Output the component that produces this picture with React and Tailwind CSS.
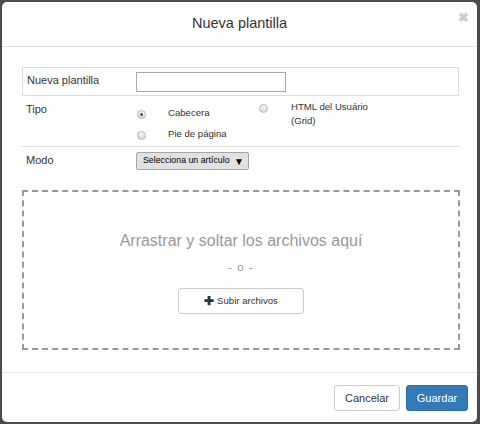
const font = { fontFamily: '"Liberation Sans", Arial, sans-serif' };

const Radio = ({ checked }) => (
  <span className="mt-[1px] flex h-[9px] w-[9px] shrink-0 items-center justify-center rounded-full border border-[#b5b5b5] bg-gradient-to-b from-[#f4f4f4] to-[#dcdcdc]">
    {checked && <span className="h-[3px] w-[3px] rounded-full bg-[#555]" />}
  </span>
);

const App = () => {
  return (
    <div
      className="min-h-[424px] w-[480px] bg-[#4b4b4b] pl-[2px] pr-[3px] pt-[2px]"
      style={font}
    >
      <div className="relative flex h-[420px] flex-col rounded-[5px] bg-white text-[#333]">
        <div className="flex h-[45px] items-center justify-center border-b border-[#e5e5e5]">
          <h4 className="text-[14.5px]">Nueva plantilla</h4>
        </div>
        <span className="absolute right-[8px] top-[9px] text-[13px] font-bold leading-none text-[#cfcfcf]">
          ✖
        </span>

        <div className="flex-1 px-[20px] pt-[20px]">
          <div className="w-[437px] text-[11px]">
            <div className="flex h-[29px] border border-[#ddd]">
              <div className="w-[113px] pl-[4px] pt-[4px]">Nueva plantilla</div>
              <div className="pt-[4px]">
                <div className="h-[20px] w-[150px] border border-[#a9a9a9]" />
              </div>
            </div>

            <div className="flex h-[51px] border-b border-[#ddd] pt-[5px]">
              <div className="w-[114px] pl-[4px]">Tipo</div>
              <div className="text-[9.6px] leading-[14px]">
                <div className="flex">
                  <div className="flex w-[123px] items-start gap-[19px] pt-[8px]">
                    <span className="ml-[1px]">
                      <Radio checked />
                    </span>
                    <span className="ml-[3px] -mt-[3px]">Cabecera</span>
                  </div>
                  <div className="flex items-start gap-[23px] pt-[2px]">
                    <Radio />
                    <span className="-mt-[3px]">
                      HTML del Usuário
                      <br />
                      (Grid)
                    </span>
                  </div>
                </div>
                <div className="flex items-start gap-[19px] pt-[2px]">
                  <span className="ml-[1px]">
                    <Radio />
                  </span>
                  <span className="ml-[3px] -mt-[3px]">Pie de página</span>
                </div>
              </div>
            </div>

            <div className="flex h-[28px] pt-[5px]">
              <div className="w-[114px] pl-[4px]">Modo</div>
              <div className="flex h-[18px] w-[113px] items-center justify-between rounded-[2px] border border-[#a6a6a6] bg-[#e1e1e1] pl-[6px] pr-[4px] text-[8.8px] text-black">
                <span>Selecciona un artículo</span>
                <span className="text-[10px]">▼</span>
              </div>
            </div>
          </div>

          <div className="mt-[15px] flex h-[160px] w-[438px] flex-col items-center border-2 border-dashed border-[#999]">
            <div className="mt-[37px] text-[16px] text-[#999]">
              Arrastrar y soltar los archivos aquí
            </div>
            <div className="mt-[6px] text-[11.5px] tracking-[1px] text-[#999]">- o -</div>
            <div className="mt-[12px] flex h-[26px] w-[126px] items-center justify-center gap-[3px] rounded-[3px] border border-[#ccc] text-[9.6px] text-[#333]">
              <span className="text-[12px] font-bold leading-none">✚</span>
              <span>Subir archivos</span>
            </div>
          </div>
        </div>

        <div className="flex h-[50px] items-start justify-end gap-[6px] border-t border-[#e5e5e5] pr-[9px] pt-[12px] text-[11px]">
          <div className="flex h-[26px] w-[66px] items-center justify-center rounded-[3px] border border-[#ccc] text-[#333]">
            Cancelar
          </div>
          <div className="flex h-[26px] w-[62px] items-center justify-center rounded-[3px] border border-[#2e6da4] bg-[#337ab7] text-white">
            Guardar
          </div>
        </div>
      </div>
    </div>
  );
};

export default App;
